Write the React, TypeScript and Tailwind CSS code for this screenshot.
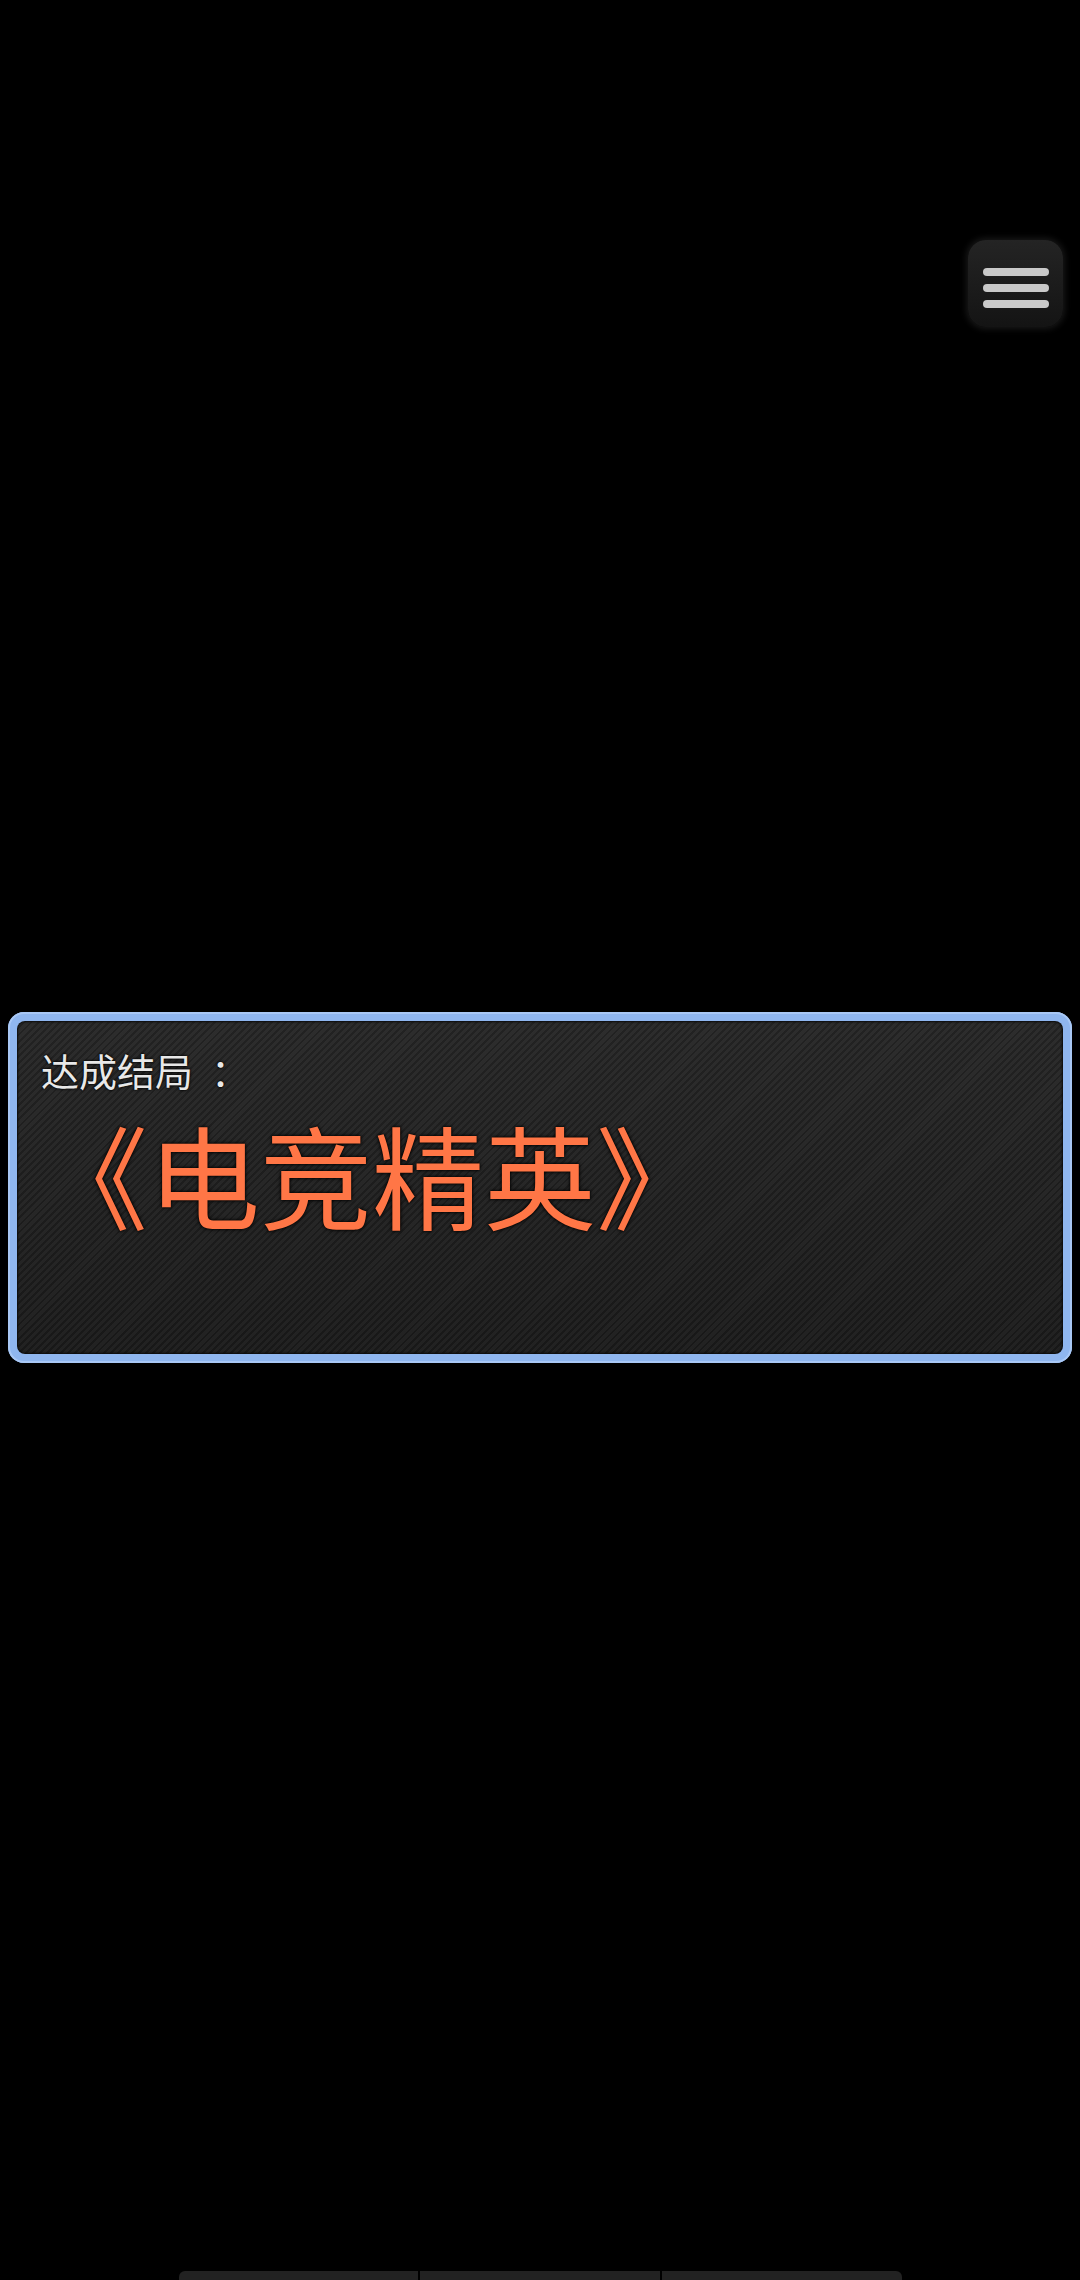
const MenuButton = () => (
  <button className="flex h-[87px] w-[95px] flex-col items-center justify-start gap-[8px] rounded-[18px] bg-[linear-gradient(to_bottom,#242424,#141414)] pt-[28px] shadow-[0_0_6px_2px_rgba(30,30,30,0.8)]">
    <span className="h-[8px] w-[66px] rounded-full bg-[#c9c9c9]" />
    <span className="h-[8px] w-[66px] rounded-full bg-[#c9c9c9]" />
    <span className="h-[8px] w-[66px] rounded-full bg-[#c9c9c9]" />
  </button>
);

const EndingCard = () => (
  <div className="mx-[8px] h-[351px] rounded-[16px] bg-[#8fb6ef] p-[9px] shadow-[inset_0_0_0_2px_#a9c8f5]">
    <div className="h-full rounded-[8px] bg-[linear-gradient(to_bottom,rgba(255,255,255,0.03),rgba(0,0,0,0.12)),repeating-linear-gradient(135deg,#1b1b1b_0px,#1b1b1b_2px,#262626_2px,#262626_5px)] pl-[24px] pt-[30px] shadow-[inset_0_0_2px_1px_#0a0a0a]">
      <div className="text-[38px] leading-none text-[#e8e8e8] [text-shadow:0_0_3px_#000,0_0_2px_#000]">
        达成结局<span className="ml-[18px]">：</span>
      </div>
      <div className="-ml-[5px] mt-[28px] text-[112px] leading-none text-[#ff7646] [text-shadow:0_0_4px_#000,0_0_2px_#000]">
        《电竞精英》
      </div>
    </div>
  </div>
);

export default function App() {
  return (
    <div className="relative flex h-[2280px] w-[1080px] flex-col overflow-hidden bg-black font-['Noto_Sans_CJK_SC','Noto_Sans',sans-serif]">
      <div className="flex justify-end pr-[17px] pt-[240px]">
        <MenuButton />
      </div>

      <div className="pt-[685px]">
        <EndingCard />
      </div>

      <div className="mt-auto flex justify-center">
        <div className="flex h-[9px] w-[723px] gap-[2px] overflow-hidden rounded-t-[6px]">
          <div className="flex-1 bg-[#222222]" />
          <div className="flex-1 bg-[#222222]" />
          <div className="flex-1 bg-[#222222]" />
        </div>
      </div>
    </div>
  );
}
